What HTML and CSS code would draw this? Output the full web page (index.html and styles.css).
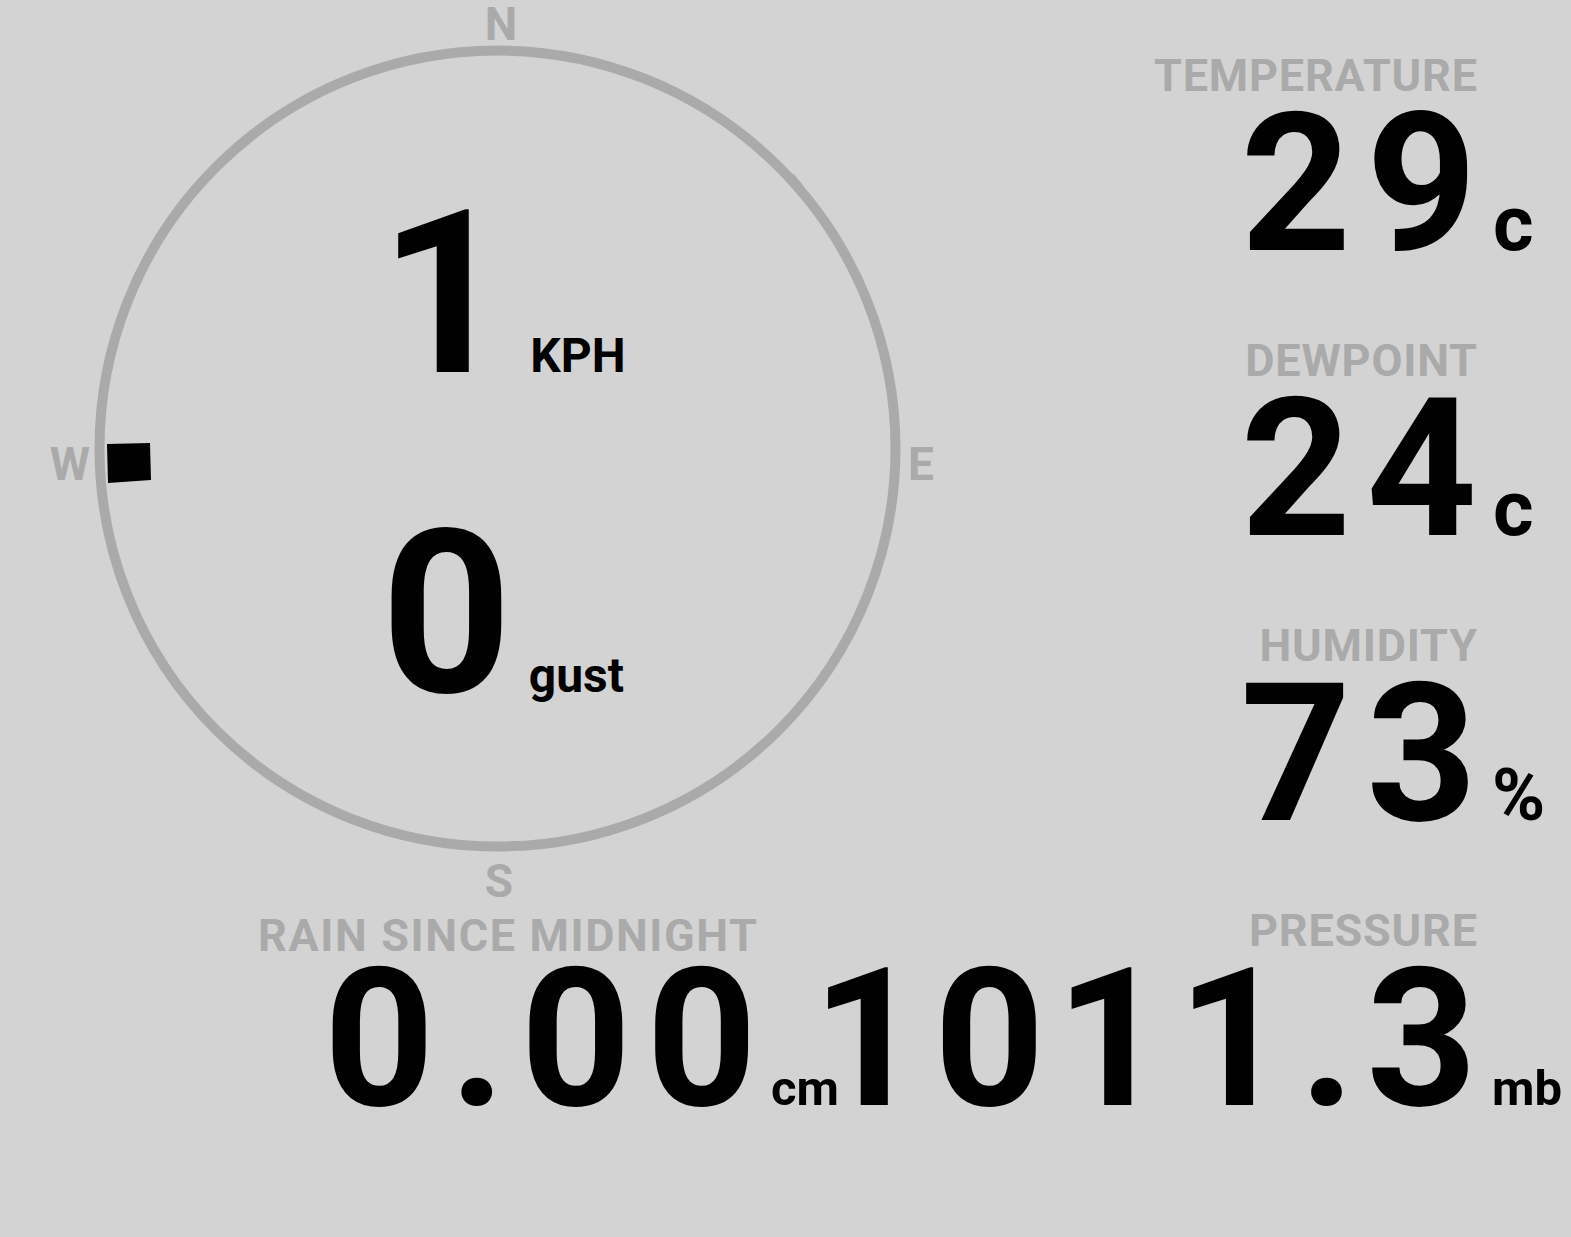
FILE: index.html
```html
<!DOCTYPE html>
<html>
<head>
<meta charset="utf-8">
<title>Weather</title>
<link rel="stylesheet" href="styles.css">
</head>
<body>
<div class="dash">
  <div class="compass">
    <svg class="dial" width="1000" height="908" viewBox="0 0 1000 908" xmlns="http://www.w3.org/2000/svg">
      <circle cx="497.5" cy="448.5" r="398" fill="none" stroke="#aaaaaa" stroke-width="10"/>
      <g stroke="#aaaaaa" stroke-width="4">
        <line x1="203" y1="179" x2="194" y2="190"/>
        <line x1="792" y1="175" x2="801" y2="186"/>
        <line x1="203" y1="714" x2="194" y2="703"/>
        <line x1="792" y1="718" x2="801" y2="707"/>
      </g>
      <g class="dir" fill="#aaaaaa">
        <text x="501" y="40" text-anchor="middle">N</text>
        <text x="908" y="480" text-anchor="start">E</text>
        <text x="499" y="897" text-anchor="middle">S</text>
        <text x="90" y="480" text-anchor="end">W</text>
      </g>
      <polygon points="107,444 150,443 151,480 108,483" fill="#000"/>
    </svg>
    <div class="reading reading-speed"><span class="big">1</span><span class="small">KPH</span></div>
    <div class="reading reading-gust"><span class="big">0</span><span class="small">gust</span></div>
  </div>

  <div class="stats">
    <div class="stat">
      <div class="label">TEMPERATURE</div>
      <div class="value">29</div>
      <div class="unit unit-c">c</div>
    </div>
    <div class="stat">
      <div class="label">DEWPOINT</div>
      <div class="value">24</div>
      <div class="unit unit-c">c</div>
    </div>
    <div class="stat">
      <div class="label">HUMIDITY</div>
      <div class="value">73</div>
      <div class="unit unit-pct">%</div>
    </div>
  </div>

  <div class="bottom">
    <div class="stat stat-rain">
      <div class="label">RAIN SINCE MIDNIGHT</div>
      <div class="value">0.00</div>
      <div class="unit">cm</div>
    </div>
    <div class="stat">
      <div class="label">PRESSURE</div>
      <div class="value value-tight">1011.3</div>
      <div class="unit">mb</div>
    </div>
  </div>
</div>
</body>
</html>
```
FILE: styles.css
```css
html, body {
  margin: 0;
  padding: 0;
}
body {
  background: #d3d3d3;
  color: #000;
  font-family: Roboto, "Liberation Sans", sans-serif;
  font-weight: 700;
  width: 1571px;
  height: 1237px;
  overflow: hidden;
}
.dash {
  display: grid;
  grid-template-columns: 1005px 1fr;
  grid-template-rows: 908px auto;
}
.compass {
  position: relative;
  grid-column: 1;
  grid-row: 1;
  display: flex;
  flex-direction: column;
  align-items: center;
  padding-top: 180px;
  gap: 92px;
  box-sizing: border-box;
}
.dial {
  position: absolute;
  top: 0;
  left: 0;
  overflow: visible;
}
.dir text {
  font-family: Roboto, "Liberation Sans", sans-serif;
  font-weight: 700;
  font-size: 46px;
}
.reading {
  display: flex;
  align-items: baseline;
}
.big {
  font-size: 228px;
  line-height: 228px;
}
.small {
  font-size: 48px;
  line-height: 56px;
  margin-left: 20px;
}
.reading-gust .small {
  margin-left: 17px;
}
.stats {
  grid-column: 2;
  grid-row: 1;
  display: flex;
  flex-direction: column;
  align-items: flex-end;
  gap: 68px;
  padding: 53px 4px 0 0;
}
.bottom {
  grid-column: 1 / 3;
  grid-row: 2;
  display: grid;
  grid-template-columns: minmax(0, 1fr) auto;
  align-items: end;
  padding-right: 4px;
}
.stat {
  display: grid;
  grid-template-columns: auto 90px;
}
.stat-rain {
  grid-template-columns: 757px auto;
}
.label {
  grid-column: 1;
  grid-row: 1;
  justify-self: end;
  font-size: 45px;
  line-height: 45px;
  color: #aaaaaa;
  white-space: nowrap;
  letter-spacing: 0.8px;
  margin-right: -0.8px;
}
.stat-rain .label {
  line-height: 35px;
  letter-spacing: 1.6px;
  margin-right: -1.6px;
}
.value {
  grid-column: 1;
  grid-row: 2;
  justify-self: end;
  align-self: baseline;
  font-size: 193px;
  line-height: 172px;
  letter-spacing: 15px;
  margin-right: -15px;
  white-space: nowrap;
}
.value-tight {
  letter-spacing: 11px;
  margin-right: -11px;
}
.unit {
  grid-column: 2;
  grid-row: 2;
  justify-self: start;
  align-self: baseline;
  font-size: 49px;
  line-height: 56px;
  padding-left: 15px;
  white-space: nowrap;
}
.unit-c {
  font-size: 78px;
  padding-left: 16px;
}
.unit-pct {
  font-size: 72px;
  padding-left: 15px;
}
.stat-rain .unit {
  padding-left: 14px;
}
```
